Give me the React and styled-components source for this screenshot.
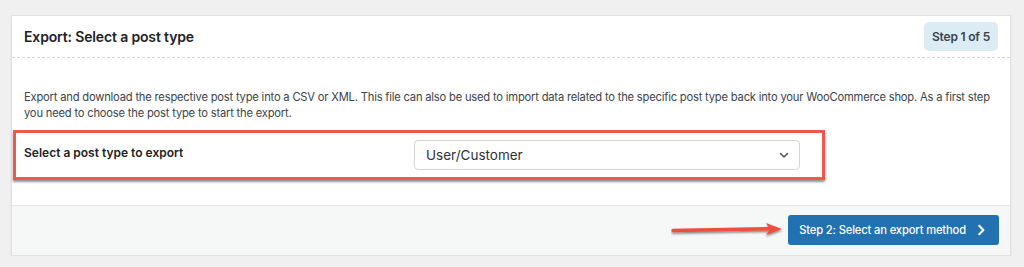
import styled, { createGlobalStyle } from 'styled-components';

const GlobalStyle = createGlobalStyle`
   html, body {
      margin: 0;
      padding: 0;
      background: #f0f0f1;
   }
   body {
      font-family: Inter, 'Noto Sans', sans-serif;
      color: #1d2327;
   }
`;

const Page = styled.div`
   padding: 15px 13px 0 11px;
`;

const Card = styled.section`
   background: #fff;
   border: 1px solid #e2e2e4;
   box-shadow: 0 1px 2px rgba(0, 0, 0, 0.08);
   height: 241px;
   box-sizing: border-box;
   display: flex;
   flex-direction: column;
`;

const Header = styled.header`
   display: flex;
   align-items: center;
   justify-content: space-between;
   height: 41px;
   padding: 0 12px 0 12px;
   border-bottom: 1px dashed #d7d7d9;

   h2 {
      margin: 0;
      font-size: 14px;
      font-weight: 600;
      color: #1d2327;
      letter-spacing: -0.15px;
   }
`;

const Badge = styled.span`
   display: inline-flex;
   align-items: center;
   height: 29px;
   padding: 0 8px;
   border-radius: 5px;
   background: #dcecf5;
   font-size: 12px;
   font-weight: 600;
   letter-spacing: -0.2px;
   color: #3c434a;
`;

const Body = styled.div`
   flex: 1;
   padding: 31px 12px 0 12px;

   p {
      margin: 0;
      font-size: 11.2px;
      line-height: 16px;
      letter-spacing: -0.2px;
      color: #3c434a;
   }
`;

const Highlight = styled.div`
   display: flex;
   align-items: center;
   margin: 9px 0 0 -11px;
   width: 812px;
   height: 50px;
   box-sizing: border-box;
   border: 3px solid #f0584b;
   box-shadow: 0 2px 2px rgba(60, 60, 60, 0.55);
   padding: 0 22px 0 8px;
`;

const Label = styled.label`
   flex: 0 0 390px;
   align-self: flex-start;
   padding-top: 12px;
   font-size: 12px;
   font-weight: 600;
   color: #1d2327;
`;

const Select = styled.div`
   flex: 1;
   display: flex;
   align-items: center;
   justify-content: space-between;
   height: 30px;
   box-sizing: border-box;
   padding: 0 10px 0 11px;
   border: 1px solid #d5d5d8;
   border-radius: 4px;
   font-size: 13.5px;
   color: #2c3338;
`;

const Footer = styled.footer`
   display: flex;
   align-items: center;
   justify-content: flex-end;
   gap: 3px;
   height: 50px;
   padding: 0 11px 2px 0;
   box-sizing: border-box;
   background: #f6f7f7;
   border-top: 1px solid #e4e4e6;
`;

const Button = styled.button`
   display: inline-flex;
   align-items: center;
   gap: 9px;
   height: 30px;
   padding: 0 12px 0 11px;
   border: none;
   border-radius: 3px;
   background: #2271b1;
   color: #fff;
   font-family: inherit;
   font-size: 11.2px;
   font-weight: 500;
   letter-spacing: -0.15px;
`;

const Chevron = ({ size = 10, color = '#50575e', width = 1.6, rotate = 0 }) => (
   <svg width={size} height={size} viewBox='0 0 10 10' style={{ transform: `rotate(${rotate}deg)` }}>
      <path d='M1.5 3.5 L5 7 L8.5 3.5' fill='none' stroke={color} strokeWidth={width} strokeLinecap='round' strokeLinejoin='round' />
   </svg>
);

const Arrow = () => (
   <svg width='114' height='18' viewBox='0 0 114 18'>
      <defs>
         <filter id='sh' x='-10%' y='-50%' width='120%' height='200%'>
            <feDropShadow dx='0' dy='1.5' stdDeviation='0.8' floodColor='#000' floodOpacity='0.5' />
         </filter>
      </defs>
      <g filter='url(#sh)'>
         <path d='M2 9.5 L98 7.8' stroke='#ef4d3f' strokeWidth='3.4' strokeLinecap='round' />
         <path d='M95 2 L111 8 L95 14 L99 8 Z' fill='#ef4d3f' />
      </g>
   </svg>
);

const App = () => {
   return (
      <>
         <GlobalStyle />
         <Page>
            <Card>
               <Header>
                  <h2>Export: Select a post type</h2>
                  <Badge>Step 1 of 5</Badge>
               </Header>
               <Body>
                  <p>
                     Export and download the respective post type into a CSV or XML. This file can also be used to import data related to the specific post type back into your WooCommerce shop. As a first step you need to choose the post type to start the export.
                  </p>
                  <Highlight>
                     <Label>Select a post type to export</Label>
                     <Select>
                        <span>User/Customer</span>
                        <Chevron />
                     </Select>
                  </Highlight>
               </Body>
               <Footer>
                  <Arrow />
                  <Button>
                     Step 2: Select an export method
                     <Chevron size={12} color='#fff' width={1.8} rotate={-90} />
                  </Button>
               </Footer>
            </Card>
         </Page>
      </>
   );
};

export default App;
